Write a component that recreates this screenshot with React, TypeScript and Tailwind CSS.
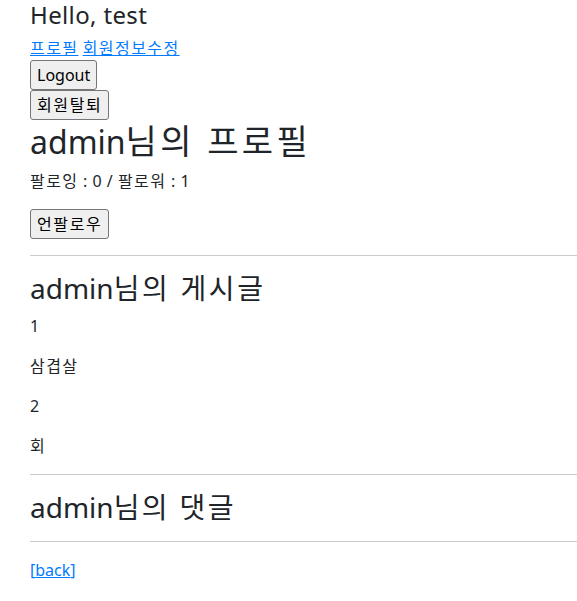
import React from 'react'

const posts = [
  { id: '1', title: '삼겹살' },
  { id: '2', title: '회' },
]

// Hangul in the reference runs wider than Noto Sans CJK, so space it out a bit
const K = ({ children, className = 'tracking-[0.09em]' }: { children: React.ReactNode; className?: string }) => (
  <span className={className}>{children}</span>
)

const Btn = ({ children }: { children: React.ReactNode }) => (
  <button className="block h-[30px] px-[6px] border border-[#767676] rounded-[3px] bg-[#efefef] text-[16px] leading-[24px] text-black">
    {children}
  </button>
)

const App = () => {
  return (
    <div className="pl-[30px] font-['Noto_Sans','Noto_Sans_CJK_KR',sans-serif] text-[16px] leading-[1.5] text-[#212529] bg-white min-h-[601px]">
      <h4 className="text-[24px] leading-[1.25] mb-[6px] tracking-[0.015em]">Hello, test</h4>
      <div className="h-6">
        <a href="#" className="text-[#007bff] underline"><K>프로필</K></a>{' '}
        <a href="#" className="text-[#007bff] underline"><K>회원정보수정</K></a>
      </div>
      <Btn>Logout</Btn>
      <Btn><K className="tracking-[0.1em]">회원탈퇴</K></Btn>
      <h2 className="text-[32px] leading-[1.2] mt-[3px] mb-2">
        admin<K className="text-[34px] leading-none tracking-[0.1em]">님의 프로필</K>
      </h2>
      <p className="mb-4 tracking-[0.03em]">
        <K>팔로잉</K> : 0 / <K>팔로워</K> : 1
      </p>
      <Btn><K className="tracking-[0.1em]">언팔로우</K></Btn>
      <hr className="my-4 border-t border-[#cccccc]" />
      <h3 className="text-[28px] leading-[1.2] mb-2">
        admin<K className="tracking-[0.095em]">님의 게시글</K>
      </h3>
      {posts.map((post) => (
        <div key={post.id}>
          <p className="mb-4">{post.id}</p>
          <p className="mb-4"><K>{post.title}</K></p>
        </div>
      ))}
      <hr className="my-4 border-t border-[#cccccc]" />
      <h3 className="text-[28px] leading-[1.2] mb-2">
        admin<K className="tracking-[0.085em]">님의 댓글</K>
      </h3>
      <hr className="my-4 border-t border-[#cccccc]" />
      <a href="#" className="text-[#007bff]">
        [<span className="underline">back</span>]
      </a>
    </div>
  )
}

export default App
